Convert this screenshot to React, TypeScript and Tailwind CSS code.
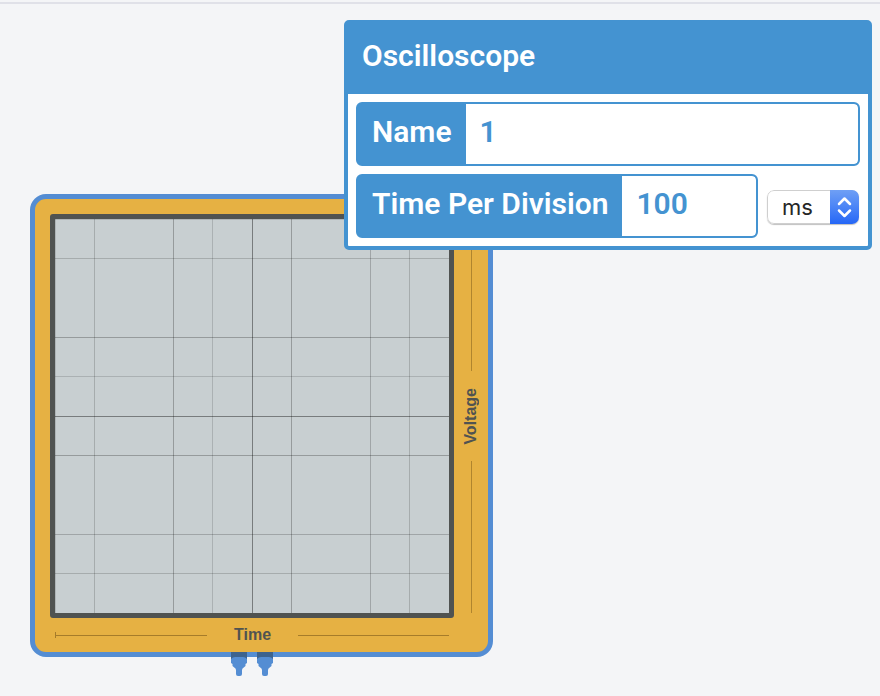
import { useState } from "react";

type GridLine = { at: number; opacity: number };

const GRID_SIZE = 394;

const GRID_LINES: GridLine[] = [
  { at: 39, opacity: 0.17 },
  { at: 118, opacity: 0.25 },
  { at: 157, opacity: 0.14 },
  { at: 197, opacity: 0.4 },
  { at: 236, opacity: 0.25 },
  { at: 315, opacity: 0.2 },
  { at: 354, opacity: 0.17 },
];

function ScreenGrid() {
  return (
    <svg
      className="block h-full w-full"
      viewBox={`0 0 ${GRID_SIZE} ${GRID_SIZE}`}
      shapeRendering="crispEdges"
      aria-hidden="true"
    >
      <rect x="0" y="0" width="1" height={GRID_SIZE} fillOpacity="0.12" />
      <rect x="0" y="0" width={GRID_SIZE} height="1" fillOpacity="0.12" />
      {GRID_LINES.map(({ at, opacity }) => (
        <g key={at} fillOpacity={opacity}>
          <rect x={at} y="0" width="1" height={GRID_SIZE} />
          <rect x="0" y={at} width={GRID_SIZE} height="1" />
        </g>
      ))}
    </svg>
  );
}

function Probe() {
  return (
    <svg width="16" height="24" viewBox="0 0 16 24" aria-hidden="true">
      <path
        d="M0 4h16v7l-1.500 1v2l-3 2.500-.5 1.500v4a2 2 0 0 1-2 2H7a2 2 0 0 1-2-2v-4l-.5-1.500-3-2.500v-2L0 11z"
        fill="#548dd3"
      />
      <path d="M0 0h16v7q-1.500-2-4-2H4Q1.500 5 0 7z" fill="#3d638f" />
    </svg>
  );
}

function Instrument() {
  return (
    <section
      aria-label="Oscilloscope 1"
      className="absolute top-[194px] left-[30px] rounded-[16px] border-5 border-[#548dd3] bg-[#e6b143] font-['Liberation_Sans',Arial,sans-serif] text-base font-bold text-[#505351]"
    >
      <div className="grid grid-cols-[404px_34px] grid-rows-[404px_34px] pt-[15px] pl-[15px]">
        <div className="rounded-[3px] border-5 border-[#505351] bg-[#c8cfd1]">
          <ScreenGrid />
        </div>
        <div className="flex flex-col items-center justify-between py-[5px]">
          <div className="w-px flex-none basis-[152px] bg-[#b0852e]" />
          <span className="rotate-180 leading-5 [writing-mode:vertical-rl]">
            Voltage
          </span>
          <div className="w-px flex-none basis-[152px] bg-[#b0852e]" />
        </div>
        <div className="flex items-center justify-between px-[5px]">
          <div className="flex items-center">
            <div className="h-1.5 w-px bg-[#a67c2a]" />
            <div className="h-px w-[151px] bg-[#a67c2a]" />
          </div>
          <span className="leading-5">Time</span>
          <div className="h-px w-[151px] bg-[#a67c2a]" />
        </div>
      </div>
      <div className="absolute top-full left-[196px] flex gap-[10px]">
        <Probe />
        <Probe />
      </div>
    </section>
  );
}

function SettingsPanel() {
  const [name, setName] = useState("1");
  const [time, setTime] = useState("100");
  const [unit, setUnit] = useState("ms");

  return (
    <form className="absolute top-5 right-2 w-[528px] rounded-[5px] border-4 border-[#4493d1] bg-white text-[30px] leading-9 font-semibold">
      <h1 className="bg-[#4493d1] px-3.5 pt-3.5 pb-5 text-white">
        Oscilloscope
      </h1>
      <div className="flex flex-col gap-2 p-2">
        <div className="flex h-16 overflow-hidden rounded-md border-2 border-[#4493d1] bg-[#4493d1]">
          <label
            htmlFor="scope-name"
            className="flex items-center pr-3.5 pb-1 pl-3.5 text-white"
          >
            Name
          </label>
          <input
            id="scope-name"
            className="min-w-0 flex-1 rounded-r-sm bg-white px-3.5 pb-1 text-[#4493d1] outline-none"
            value={name}
            onChange={(e) => setName(e.target.value)}
          />
        </div>
        <div className="flex items-center gap-[9px] pr-px">
          <div className="flex h-16 min-w-0 flex-1 overflow-hidden rounded-md border-2 border-[#4493d1] bg-[#4493d1]">
            <label
              htmlFor="scope-time"
              className="flex flex-none items-center pr-3.5 pb-1 pl-3.5 text-white"
            >
              Time Per Division
            </label>
            <input
              id="scope-time"
              className="min-w-0 flex-1 rounded-r-sm bg-white px-3.5 pb-1 text-[#4493d1] outline-none"
              value={time}
              onChange={(e) => setTime(e.target.value)}
            />
          </div>
          <div className="relative mt-0.5 h-[34px] w-[92px] overflow-hidden rounded-[7px] shadow-[0_1px_1px_rgba(0,0,0,0.25)]">
            <select
              aria-label="Time unit"
              className="block h-full w-full appearance-none rounded-[7px] border border-[#cfcfcf] bg-white pl-3.5 font-[Inter,sans-serif] text-[22px] leading-8 font-normal text-[#262626] outline-none"
              value={unit}
              onChange={(e) => setUnit(e.target.value)}
            >
              <option>ms</option>
              <option>s</option>
            </select>
            <div className="pointer-events-none absolute inset-y-0 right-0 w-[29px] bg-linear-to-b from-[#6f9ff5] to-[#2566f6]">
              <svg
                className="block h-full w-full"
                viewBox="0 0 29 34"
                fill="none"
                stroke="white"
                strokeWidth="2.5"
                strokeLinecap="round"
                strokeLinejoin="round"
                aria-hidden="true"
              >
                <path d="M9 14l5.500-5.500 5.500 5.500M9 20.500l5.500 5.500 5.500-5.500" />
              </svg>
            </div>
          </div>
        </div>
      </div>
    </form>
  );
}

export default function App() {
  return (
    <main className="relative min-h-screen overflow-hidden bg-[#f4f5f7] pt-0.5 font-[Roboto,sans-serif]">
      <div className="h-0.5 bg-[#e0e1e8]" />
      <Instrument />
      <SettingsPanel />
    </main>
  );
}
